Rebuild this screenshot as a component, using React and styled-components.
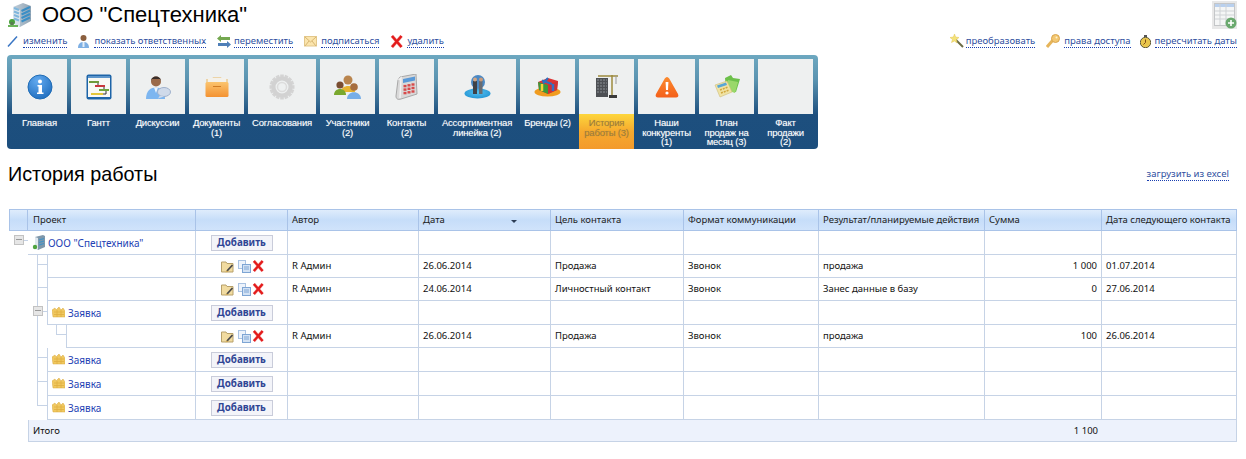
import React from "react";
import styled, { createGlobalStyle } from "styled-components";

const Global = createGlobalStyle`
  html, body { margin: 0; padding: 0; background: #fff; }
  body { font-family: "Liberation Sans", Arial, sans-serif; color: #000; }
`;

const Page = styled.div`
  width: 1246px;
  height: 459px;
  overflow: hidden;
  padding: 2px 9px 0 7px;
  box-sizing: border-box;
  display: flex;
  flex-direction: column;
`;
const TitleRow = styled.div`
  display: flex;
  align-items: flex-start;
  justify-content: space-between;
  height: 30px;
`;
const TitleGroup = styled.div`
  display: flex;
  align-items: flex-start;
  gap: 10px;
`;
const Title = styled.h1`
  margin: 0;
  font: 400 22px/25px "Liberation Sans", Arial, sans-serif;
`;
const ThumbSlot = styled.div`
  margin-top: -1px;
`;
const ActionBar = styled.div`
  display: flex;
  justify-content: space-between;
  align-items: center;
  height: 18px;
`;
const ActionGroup = styled.div`
  display: flex;
  align-items: center;
`;
const Action = styled.div`
  display: flex;
  align-items: center;
  gap: ${(p) => p.$gap ?? 4}px;
  margin-left: ${(p) => p.$ml ?? 0}px;
`;
const DotLink = styled.a`
  font: 400 9.5px/12px "Noto Sans", sans-serif;
  color: #2f4f9f;
  border-bottom: 1px dotted #1a3fb0;
  white-space: nowrap;
  cursor: pointer;
`;
const Nav = styled.nav`
  margin-top: 5px;
  width: 811px;
  height: 94px;
  box-sizing: border-box;
  padding: 4px 5px 0;
  border-radius: 4px;
  display: flex;
  gap: 4px;
  background: linear-gradient(#6da8c0 0, #5a93b0 25px, #1d4f7e 60px, #1c4e7d 100%);
`;
const NavItem = styled.div`
  width: ${(p) => p.$w}px;
  display: flex;
  flex-direction: column;
`;
const Tile = styled.div`
  height: 55px;
  background: #eef0f0;
  display: flex;
  align-items: center;
  justify-content: center;
`;
const NavLabel = styled.div`
  flex: 1;
  padding-top: 4px;
  font: 400 9.5px/9.5px "Liberation Sans", Arial, sans-serif;
  letter-spacing: -0.2px;
  text-align: center;
  white-space: pre-line;
  color: ${(p) => (p.$active ? "#9b7c3c" : "#fff")};
  text-shadow: 0 0 1px ${(p) => (p.$active ? "rgba(155,124,60,.4)" : "rgba(255,255,255,.45)")};
  background: ${(p) =>
    p.$active ? "linear-gradient(#fdd63c, #f6a92e 50%, #f39a2c)" : "transparent"};
`;
const HeadingRow = styled.div`
  display: flex;
  justify-content: space-between;
  align-items: center;
  margin-top: 14px;
  height: 22px;
  padding-left: 1px;
  padding-right: 8px;
`;
const Heading = styled.h2`
  margin: 0;
  font: 400 19.8px/22px "Liberation Sans", Arial, sans-serif;
`;
const Table = styled.table`
  margin: 24px 0 0 2px;
  border-collapse: separate;
  border-spacing: 0;
  table-layout: fixed;
  width: 1228px;
  font: 400 9.5px/12px "Noto Sans", sans-serif;
`;
const Head = styled.th`
  height: 22px;
  box-sizing: border-box;
  padding: 0 4px 0 ${(p) => p.$pad ?? 4}px;
  font-weight: 400;
  text-align: left;
  color: #222;
  position: relative;
  white-space: nowrap;
  background: linear-gradient(#dfecfc, #c6ddf9 50%, #d0e3fb);
  border: solid #a9c3e8;
  border-width: 1px 1px 1px 0;
  &:first-child { border-left-width: 1px; }
`;
const Cell = styled.td`
  height: ${(p) => p.$h}px;
  box-sizing: border-box;
  padding: 0 4px;
  white-space: nowrap;
  color: #111;
  text-align: ${(p) => (p.$right ? "right" : "left")};
  border-bottom: 1px solid #c6d3e6;
  border-right: 1px solid #c6d3e6;
  ${(p) => p.$left && "border-left: 1px solid #c6d3e6;"}
`;
const TreeCell = styled.td`
  padding: 0;
  position: relative;
`;
const Line = styled.span`
  position: absolute;
  background: #c6d3e6;
  left: ${(p) => p.$x}px;
  top: ${(p) => p.$y}px;
  width: ${(p) => p.$w ?? 1}px;
  height: ${(p) => p.$hh ?? 1}px;
`;
const Expander = styled.span`
  position: absolute;
  left: ${(p) => p.$x}px;
  top: ${(p) => p.$y}px;
  width: 10px;
  height: 10px;
  box-sizing: border-box;
  border: 1px solid #c2c2c2;
  background: #e6e6e6;
  &::after {
    content: "";
    position: absolute;
    left: 1px;
    right: 1px;
    top: 3px;
    height: 1px;
    background: #999;
  }
`;
const NameWrap = styled.div`
  display: flex;
  align-items: center;
  gap: ${(p) => p.$gap ?? 3}px;
`;
const NameLink = styled.a`
  color: #2442b4;
  font-size: 10px;
  cursor: pointer;
`;
const CenterRow = styled.div`
  display: flex;
  justify-content: center;
  align-items: center;
  gap: 1px;
  padding-left: 1px;
`;
const Spacer = styled.span`
  width: 2px;
`;
const AddButton = styled.button`
  width: 62px;
  height: 16px;
  box-sizing: border-box;
  padding: 0;
  background: #f3f4f9;
  border: 1px solid #c9ccda;
  font: 700 9.8px/12px "Noto Sans", sans-serif;
  color: #2f4594;
  display: block;
  margin: 0 auto;
`;
const SortMark = styled.span`
  position: absolute;
  right: 33px;
  top: 10px;
  border: 3px solid transparent;
  border-top-color: #2c3c55;
  border-bottom: 0;
  width: 0;
  height: 0;
`;
const TotalCell = styled.td`
  height: 22px;
  box-sizing: border-box;
  padding: 0 4px;
  background: #edf2fc;
  color: #111;
  text-align: ${(p) => (p.$right ? "right" : "left")};
  border-bottom: 1px solid #c6d3e6;
  ${(p) => p.$left && "border-left: 1px solid #c6d3e6;"}
  ${(p) => p.$end && "border-right: 1px solid #c6d3e6;"}
`;

/* ---------- drawings ---------- */
const Svg = ({ s = 14, w, h, vb, children }) => (
  <svg width={w ?? s} height={h ?? s} viewBox={vb ?? `0 0 ${w ?? s} ${h ?? s}`} style={{ display: "block", flex: "none" }}>
    {children}
  </svg>
);

const Building = () => (
  <Svg s={25} vb="0 0 25 25">
    <defs>
      <linearGradient id="bl" x1="0" x2="1"><stop offset="0" stopColor="#c4d0da" /><stop offset="1" stopColor="#8fa3b4" /></linearGradient>
    </defs>
    <path d="M6 5 L16 1 L24 4 V19 L13 25 L6 21Z" fill="url(#bl)" />
    <path d="M6 5 L13 8 V25 L6 21Z" fill="#dbe4ec" />
    {[9, 12.5, 16, 19.5].map((y) => (
      <g key={y}>
        <path d={`M14.5 ${y} L23 ${y - 4}`} stroke="#3b8fc6" strokeWidth="2" />
        <path d={`M7 ${y - 3} L12 ${y - 1}`} stroke="#7fb6dc" strokeWidth="2" />
      </g>
    ))}
    <circle cx="5" cy="20" r="3" fill="#49a03c" />
    <rect x="3.5" y="20" width="3" height="4" fill="#5a7a52" />
    <rect x="1" y="23" width="10" height="2" fill="#6cb45a" />
  </Svg>
);
const Pencil = () => (
  <Svg w={11} h={12}><path d="M1 11.5 L10 1.5" stroke="#3a76c4" strokeWidth="1.5" /></Svg>
);
const Person = () => (
  <Svg w={13} h={14}>
    <circle cx="6.5" cy="4" r="3" fill="#8b5f3f" />
    <path d="M1 14 C1 9 4 8 6.5 8 S12 9 12 14Z" fill="#7fb0e4" />
    <path d="M5.5 8 H7.5 V13 H5.5Z" fill="#e5eef8" />
  </Svg>
);
const Arrows = () => (
  <Svg w={14} h={13}>
    <path d="M0 3.5 L4 0 V2 H13 V5 H4 V7Z" fill="#74a850" />
    <path d="M14 9.5 L10 6 V8 H1 V11 H10 V13Z" fill="#4f7fb8" />
  </Svg>
);
const Envelope = () => (
  <Svg w={13} h={11}>
    <rect x="0.5" y="0.5" width="12" height="9.5" fill="#fbe5ad" stroke="#e3c78a" />
    <path d="M1 1 L6.5 6 L12 1 M1 10 L5 5 M12 10 L8 5" stroke="#d8b673" fill="none" />
  </Svg>
);
const RedX = ({ s = 13 }) => (
  <Svg s={s} vb="0 0 13 13">
    <path d="M2 1 L11.5 12 M11.5 1 L2 12" stroke="#f3a0a0" strokeWidth="3.4" />
    <path d="M2 1 L11.5 12 M11.5 1 L2 12" stroke="#e31b1b" strokeWidth="2.4" />
  </Svg>
);
const Wand = () => (
  <Svg w={14} h={14}>
    <path d="M5 5 L13 13" stroke="#6b6b45" strokeWidth="2" />
    <path d="M4.5 0 L5.6 3 L9 3.5 L6.4 5.6 L7 9 L4.5 7 L1.5 8.5 L2.5 5.5 L0 3.5 L3.4 3Z" fill="#f4e27a" stroke="#e3c453" strokeWidth=".5" />
  </Svg>
);
const Key = () => (
  <Svg w={14} h={14}>
    <path d="M1 13 L7 6" stroke="#e6b55a" strokeWidth="3" />
    <circle cx="9.5" cy="4.5" r="4" fill="#f3c872" stroke="#d9a44d" />
    <circle cx="10.5" cy="3.5" r="1" fill="#fff3cf" />
  </Svg>
);
const Clock = () => (
  <Svg w={11} h={13}>
    <rect x="4" y="0" width="3" height="2" fill="#555" />
    <circle cx="5.5" cy="7.5" r="5.2" fill="#e9c64c" stroke="#5e5a3c" />
    <path d="M5.5 4.5 V7.5 L3.5 9.5" stroke="#7a4b16" fill="none" />
  </Svg>
);
const TableAdd = () => (
  <Svg w={25} h={28}>
    <rect x="0" y="0" width="25" height="28" fill="#e8e8e8" />
    <rect x="2.5" y="2.5" width="20" height="22" fill="#f5f6f6" stroke="#c4c6c8" />
    <rect x="3" y="3" width="19" height="3" fill="#b9d0ee" />
    <path d="M3 10 H22 M3 14 H22 M3 18 H22 M8 3 V24 M14 3 V24" stroke="#cfd2d5" />
    <circle cx="19" cy="22" r="5.5" fill="#6aa96e" />
    <path d="M19 19 V25 M16 22 H22" stroke="#fff" strokeWidth="1.6" />
  </Svg>
);
const Info = () => (
  <Svg s={26}>
    <defs>
      <radialGradient id="ig" cx=".4" cy=".25" r=".9"><stop offset="0" stopColor="#62aaf0" /><stop offset="1" stopColor="#1766b8" /></radialGradient>
    </defs>
    <circle cx="13" cy="13" r="12" fill="url(#ig)" stroke="#1f6cb5" />
    <circle cx="13" cy="7.5" r="2" fill="#fff" />
    <path d="M10.5 11 H15 V18.5 H16.5 V20 H10 V18.5 H11.5 V12.5 H10.5Z" fill="#fff" />
  </Svg>
);
const Gantt = () => (
  <Svg s={26}>
    <rect x="0.5" y="0.5" width="25" height="25" rx="2" fill="#1d64a8" />
    <rect x="2" y="4" width="22" height="19" fill="#f8f8f4" />
    <path d="M2 3 H24" stroke="#9cc6ee" />
    <rect x="3" y="7" width="10" height="2" fill="#6e9a3a" />
    <rect x="9" y="11" width="10" height="2" fill="#c9373c" />
    <rect x="13" y="15" width="10" height="2" fill="#6ea33a" />
    <rect x="5" y="19" width="12" height="2" fill="#e3c63a" />
    <path d="M12 9 V11 M18 13 V15 M20 17 V20 H17" stroke="#333" fill="none" />
  </Svg>
);
const Talk = () => (
  <Svg s={26}>
    <circle cx="11" cy="7.5" r="5" fill="#9a6a4a" />
    <path d="M6 7 C6 1 16 1 16 7 L15 5 H7Z" fill="#3a2f2a" />
    <path d="M1 25 C1 16 6 13.5 11 13.5 S20 16 20 25Z" fill="#7db6f0" />
    <path d="M9 13.5 L11 19 L13 13.5Z" fill="#eef4fb" />
    <ellipse cx="19" cy="18" rx="6.5" ry="4.5" fill="#cfdaea" stroke="#9fb1cc" />
    <path d="M15 21.5 L13 24.5 L19 22.5Z" fill="#cfdaea" />
  </Svg>
);
const Folder = () => (
  <Svg w={24} h={22}>
    <defs>
      <linearGradient id="fo" x1="0" x2="0" y1="0" y2="1"><stop offset="0" stopColor="#fbc46e" /><stop offset="1" stopColor="#f39232" /></linearGradient>
    </defs>
    <path d="M1 3 H7 L8 1 H16 L17 3 H23 V8 H1Z" fill="#ecd4a8" />
    <rect x="3" y="2" width="18" height="5" fill="#f4f1ea" />
    <rect x="0.5" y="6" width="23" height="15" rx="1.5" fill="url(#fo)" />
    <rect x="8" y="10" width="8" height="1" fill="#cf7c24" />
  </Svg>
);
const Gear = () => {
  const teeth = Array.from({ length: 16 }, (_, i) => i * 22.5);
  return (
    <Svg s={26}>
      {teeth.map((a) => (
        <rect key={a} x="11.2" y="0.5" width="3.6" height="5" fill="#d4d4d4" transform={`rotate(${a} 13 13)`} />
      ))}
      <circle cx="13" cy="13" r="8.5" fill="none" stroke="#d2d2d2" strokeWidth="4" />
      <circle cx="13" cy="13" r="4.5" fill="none" stroke="#dcdcdc" strokeWidth="1.5" />
    </Svg>
  );
};
const Team = () => (
  <Svg w={27} h={24}>
    <circle cx="14" cy="5" r="4.5" fill="#b9854e" />
    <path d="M7 17 C7 9 21 9 21 17Z" fill="#e6b430" />
    <circle cx="6" cy="10" r="3.6" fill="#7a4d31" />
    <path d="M0 20 C0 12 12 12 12 20Z" fill="#79a82e" />
    <circle cx="20" cy="12" r="3.8" fill="#a66e40" />
    <path d="M13 24 C13 15 27 15 27 24Z" fill="#76aee8" />
  </Svg>
);
const Phone = () => (
  <Svg w={23} h={26}>
    <path d="M5 3 L21 0 L22 20 L6 25 C3 26 1 25 1 22 L3 6Z" fill="#d9d9d9" stroke="#a8a8a8" />
    <path d="M3.5 6 L6 4 L5 24" stroke="#f2f2f2" fill="none" strokeWidth="1.5" />
    <path d="M8 5 L20 2.5 L20 6.5 L8 9Z" fill="#5a9ad8" />
    {[11, 14.5, 18].map((y) =>
      [8.5, 12.5, 16.5].map((x) => <rect key={`${x}${y}`} x={x} y={y - (x - 8) / 5} width="3" height="2.4" fill="#d84a4a" />)
    )}
  </Svg>
);
const Globe = () => (
  <Svg w={27} h={24}>
    <defs>
      <radialGradient id="dk" cx=".5" cy=".4" r=".7"><stop offset="0" stopColor="#54c0f0" /><stop offset="1" stopColor="#1d8fd0" /></radialGradient>
    </defs>
    <ellipse cx="13.5" cy="18.5" rx="13" ry="5" fill="url(#dk)" />
    <circle cx="14" cy="7" r="7" fill="#4b89c4" />
    <rect x="9" y="6" width="4" height="13" fill="#3e4248" />
    <rect x="15" y="6" width="3.5" height="13" fill="#686c72" />
    <circle cx="11" cy="4.5" r="2" fill="#d2a684" />
    <circle cx="17" cy="4.5" r="2" fill="#c99a78" />
  </Svg>
);
const Rubik = () => (
  <Svg w={27} h={20}>
    <ellipse cx="13.5" cy="15" rx="13" ry="4.5" fill="#f09c1f" />
    <path d="M4 5 L14 1 L24 4 L23 13 L14 17 L5 13Z" fill="#d33" />
    <path d="M4 5 L14 8 L14 17 L5 13Z" fill="#3a9a3a" />
    <path d="M14 8 L24 4 L23 13 L14 17Z" fill="#c33" />
    <path d="M8 3.5 L18 7 M14 1 L9 6.5" stroke="#2b6fc0" strokeWidth="2" />
    <path d="M8 7 V14" stroke="#f4d23a" strokeWidth="2.5" />
    <path d="M19 7 V14" stroke="#3570c4" strokeWidth="2.5" />
  </Svg>
);
const Crane = () => (
  <Svg w={24} h={25}>
    <rect x="1" y="4" width="12" height="19" fill="#4d5054" />
    {[6, 9, 12, 15, 18].map((y) => (
      <path key={y} d={`M2 ${y} H12`} stroke="#8c9095" strokeDasharray="2 1" />
    ))}
    <path d="M17 1 V22 M3 2 H23" stroke="#9d8a3e" strokeWidth="1.5" />
    <path d="M21 2 V10" stroke="#9a9a9a" />
    <rect x="14" y="21" width="8" height="3" fill="#3a3a3a" />
  </Svg>
);
const Warn = () => (
  <Svg w={24} h={22}>
    <defs>
      <linearGradient id="wg" x1="0" x2="0" y1="0" y2="1"><stop offset="0" stopColor="#fb8a2e" /><stop offset="1" stopColor="#f4601a" /></linearGradient>
    </defs>
    <path d="M12 1 C13 1 14 2 14.5 3 L23 18 C24 20 23 21.5 21 21.5 H3 C1 21.5 0 20 1 18 L9.5 3 C10 2 11 1 12 1Z" fill="url(#wg)" />
    <path d="M10.6 6 H13.4 L13 14 H11Z" fill="#fff" />
    <circle cx="12" cy="17" r="1.6" fill="#fff" />
  </Svg>
);
const PlanIcon = () => (
  <Svg w={26} h={23}>
    <path d="M11 3 L17 0 L19 3 L26 4 L22 17 L12 15Z" fill="#6cc04a" />
    <path d="M14 5 L24 7 L21 18 L12 15Z" fill="#9ad86a" />
    <path d="M1 10 L13 6 L18 17 L6 22Z" fill="#f0e3a4" stroke="#cfbd7a" strokeWidth=".6" />
    <path d="M3 10.5 L12 7.5 L13 10 L4 13Z" fill="#58a6d6" />
    <path d="M6 15 L14 12 M7 18 L15 15" stroke="#d2a83f" strokeWidth="1.6" strokeDasharray="2 1" />
  </Svg>
);
const FolderEdit = () => (
  <Svg w={13} h={13}>
    <path d="M0.5 2 H5 L6 3.5 H12 V12 H0.5Z" fill="#f1dba0" stroke="#b7a06a" />
    <path d="M6 11 L11.5 5" stroke="#4a4a4a" strokeWidth="1.8" />
    <path d="M4.5 12.5 L6 10.5 L7 11.5Z" fill="#d8a63f" />
  </Svg>
);
const Copy = () => (
  <Svg w={13} h={13}>
    <rect x="0.5" y="0.5" width="7" height="8" fill="#edf3fb" stroke="#a9c2e2" />
    <rect x="4.5" y="4.5" width="8" height="8" fill="#d3e2f4" stroke="#7ea5d4" />
    <path d="M6 7 H11 M6 9 H11" stroke="#7ea5d4" />
  </Svg>
);
const ProjectMini = () => (
  <Svg w={14} h={15} vb="0 0 14 15">
    <path d="M3 2 L11 0 L13 1 V12 L6 15 L3 13Z" fill="#7f97aa" />
    <path d="M3 2 L6 3 V15 L3 13Z" fill="#dfe7ee" />
    {[5, 7.5, 10].map((y) => <path key={y} d={`M7 ${y} L12 ${y - 1.5}`} stroke="#3f93c9" strokeWidth="1.3" />)}
    <circle cx="3" cy="12" r="2.2" fill="#4fa43f" />
  </Svg>
);
const OrderIcon = () => (
  <Svg w={13} h={11}>
    <path d="M0 3 L3 1 L4 3 L7 0 L9 3 L11 1 L13 4 V10 H1Z" fill="#f0c860" stroke="#d9a93f" strokeWidth=".5" />
    <path d="M2 5 H12 M2 7.5 H12 M5 3 V10 M9 3 V10" stroke="#e0ae43" strokeWidth=".8" />
  </Svg>
);

/* ---------- data ---------- */
const navItems = [
  { w: 55, label: "Главная", icon: <Info /> },
  { w: 55, label: "Гантт", icon: <Gantt /> },
  { w: 55, label: "Дискуссии", icon: <Talk /> },
  { w: 55, label: "Документы\n(1)", icon: <Folder /> },
  { w: 68, label: "Согласования", icon: <Gear /> },
  { w: 55, label: "Участники\n(2)", icon: <Team /> },
  { w: 55, label: "Контакты\n(2)", icon: <Phone /> },
  { w: 78, label: "Ассортиментная\nлинейка (2)", icon: <Globe /> },
  { w: 55, label: "Бренды (2)", icon: <Rubik /> },
  { w: 55, label: "История\nработы (3)", icon: <Crane />, active: true },
  { w: 57, label: "Наши\nконкуренты\n(1)", icon: <Warn /> },
  { w: 55, label: "План\nпродаж на\nмесяц (3)", icon: <PlanIcon /> },
  { w: 55, label: "Факт\nпродажи\n(2)", icon: null },
];

const widths = [19, 19, 19, 130, 92, 131, 132, 133, 135, 166, 117, 135];
const heads = ["Автор", "Дата", "Цель контакта", "Формат коммуникации", "Результат/планируемые действия", "Сумма", "Дата следующего контакта"];

const DataCells = ({ row }) => (
  <>
    <Cell $h={row.h}>{row.author}</Cell>
    <Cell $h={row.h}>{row.date}</Cell>
    <Cell $h={row.h}>{row.goal}</Cell>
    <Cell $h={row.h}>{row.format}</Cell>
    <Cell $h={row.h}>{row.result}</Cell>
    <Cell $h={row.h} $right>{row.sum}</Cell>
    <Cell $h={row.h}>{row.next}</Cell>
  </>
);
const Buttons = () => (
  <CenterRow>
    <FolderEdit /><Spacer /><Copy /><RedX s={12} />
  </CenterRow>
);

export default function App() {
  return (
    <Page>
      <Global />
      <TitleRow>
        <TitleGroup>
          <Building />
          <Title>ООО "Спецтехника"</Title>
        </TitleGroup>
        <ThumbSlot><TableAdd /></ThumbSlot>
      </TitleRow>
      <ActionBar>
        <ActionGroup>
          <Action $gap={5}><Pencil /><DotLink>изменить</DotLink></Action>
          <Action $ml={10}><Person /><DotLink>показать ответственных</DotLink></Action>
          <Action $ml={11} $gap={3}><Arrows /><DotLink>переместить</DotLink></Action>
          <Action $ml={11}><Envelope /><DotLink>подписаться</DotLink></Action>
          <Action $ml={11}><RedX /><DotLink>удалить</DotLink></Action>
        </ActionGroup>
        <ActionGroup>
          <Action $gap={2}><Wand /><DotLink>преобразовать</DotLink></Action>
          <Action $ml={11}><Key /><DotLink>права доступа</DotLink></Action>
          <Action $ml={9}><Clock /><DotLink>пересчитать даты</DotLink></Action>
        </ActionGroup>
      </ActionBar>
      <Nav>
        {navItems.map((n) => (
          <NavItem key={n.label} $w={n.w}>
            <Tile>{n.icon}</Tile>
            <NavLabel $active={n.active}>{n.label}</NavLabel>
          </NavItem>
        ))}
      </Nav>
      <HeadingRow>
        <Heading>История работы</Heading>
        <DotLink>загрузить из excel</DotLink>
      </HeadingRow>
      <Table>
        <colgroup>
          {widths.map((w, i) => <col key={i} style={{ width: w }} />)}
        </colgroup>
        <thead>
          <tr>
            <Head />
            <Head colSpan={3} $pad={5}>Проект</Head>
            <Head />
            {heads.map((h) => (
              <Head key={h}>{h}{h === "Дата" && <SortMark />}</Head>
            ))}
          </tr>
        </thead>
        <tbody>
          <tr>
            <TreeCell>
              <Expander $x={5} $y={4} />
              <Line $x={15} $y={9} $w={4} />
            </TreeCell>
            <Cell $h={24} colSpan={3}>
              <NameWrap $gap={2}><ProjectMini /><NameLink>ООО "Спецтехника"</NameLink></NameWrap>
            </Cell>
            <Cell $h={24}><AddButton>Добавить</AddButton></Cell>
            <DataCells row={{ h: 24 }} />
          </tr>
          <tr>
            <TreeCell />
            <TreeCell>
              <Line $x={9} $y={0} $hh={23} />
              <Line $x={9} $y={9} $w={10} />
            </TreeCell>
            <Cell $h={23} $left colSpan={2} />
            <Cell $h={23}><Buttons /></Cell>
            <DataCells row={{ h: 23, author: "R Админ", date: "26.06.2014", goal: "Продажа", format: "Звонок", result: "продажа", sum: "1 000", next: "01.07.2014" }} />
          </tr>
          <tr>
            <TreeCell />
            <TreeCell>
              <Line $x={9} $y={0} $hh={23} />
              <Line $x={9} $y={9} $w={10} />
            </TreeCell>
            <Cell $h={23} $left colSpan={2} />
            <Cell $h={23}><Buttons /></Cell>
            <DataCells row={{ h: 23, author: "R Админ", date: "24.06.2014", goal: "Личностный контакт", format: "Звонок", result: "Занес данные в базу", sum: "0", next: "27.06.2014" }} />
          </tr>
          <tr>
            <TreeCell />
            <TreeCell>
              <Line $x={9} $y={0} $hh={24} />
              <Expander $x={5} $y={5} />
              <Line $x={15} $y={10} $w={4} />
            </TreeCell>
            <Cell $h={24} $left colSpan={2}>
              <NameWrap><OrderIcon /><NameLink>Заявка</NameLink></NameWrap>
            </Cell>
            <Cell $h={24}><AddButton>Добавить</AddButton></Cell>
            <DataCells row={{ h: 24 }} />
          </tr>
          <tr>
            <TreeCell />
            <TreeCell><Line $x={9} $y={0} $hh={23} /></TreeCell>
            <TreeCell>
              <Line $x={9} $y={0} $hh={10} />
              <Line $x={9} $y={9} $w={10} />
            </TreeCell>
            <Cell $h={23} $left />
            <Cell $h={23}><Buttons /></Cell>
            <DataCells row={{ h: 23, author: "R Админ", date: "26.06.2014", goal: "Продажа", format: "Звонок", result: "продажа", sum: "100", next: "26.06.2014" }} />
          </tr>
          {[0, 1, 2].map((i) => (
            <tr key={i}>
              <TreeCell />
              <TreeCell>
                <Line $x={9} $y={0} $hh={i === 2 ? 10 : 24} />
                <Line $x={9} $y={9} $w={10} />
              </TreeCell>
              <Cell $h={24} $left colSpan={2}>
                <NameWrap><OrderIcon /><NameLink>Заявка</NameLink></NameWrap>
              </Cell>
              <Cell $h={24}><AddButton>Добавить</AddButton></Cell>
              <DataCells row={{ h: 24 }} />
            </tr>
          ))}
          <tr>
            <td />
            <TotalCell $left colSpan={9}>Итого</TotalCell>
            <TotalCell $right>1 100</TotalCell>
            <TotalCell $end />
          </tr>
        </tbody>
      </Table>
    </Page>
  );
}
